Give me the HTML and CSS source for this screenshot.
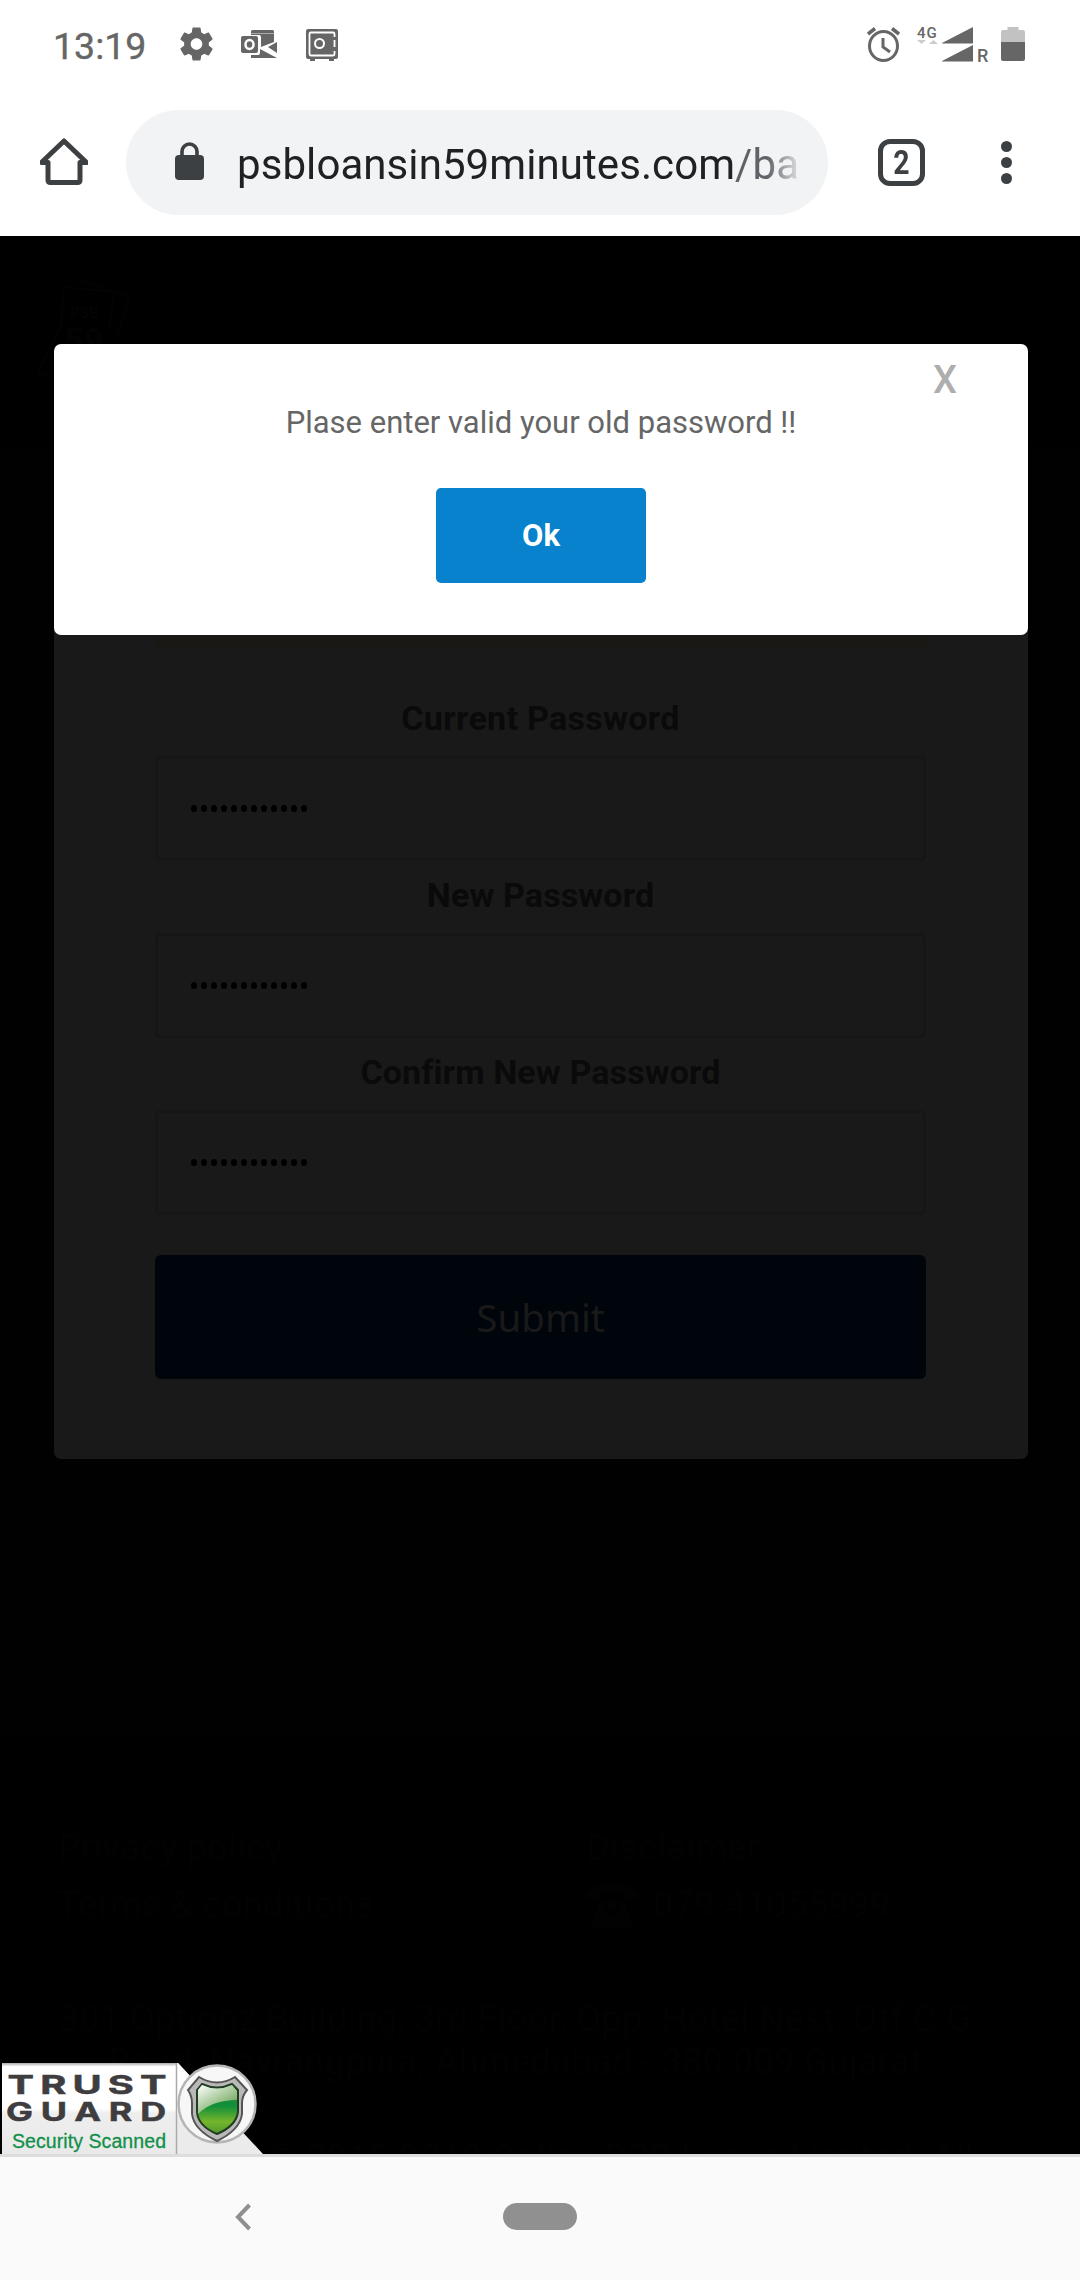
FILE: index.html
```html
<!DOCTYPE html>
<html lang="en">
<head>
<meta charset="utf-8">
<title>Change password</title>
<link rel="stylesheet" href="styles.css">
</head>
<body>
<header class="status">
  <span class="clock">13:19</span>
  <svg class="gear" viewBox="2 2 20 20" width="33" height="34"><path fill="#666" d="M19.43 12.98c.04-.32.07-.64.07-.98s-.03-.66-.07-.98l2.11-1.65c.19-.15.24-.42.12-.64l-2-3.46c-.12-.22-.39-.3-.61-.22l-2.49 1c-.52-.4-1.08-.73-1.69-.98l-.38-2.650C14.460 2.180 14.250 2 14 2h-4c-.25 0-.46.18-.49.42l-.38 2.650c-.61.25-1.170.59-1.690.98l-2.490-1c-.23-.09-.49 0-.61.22l-2 3.460c-.13.22-.07.49.12.64l2.110 1.650c-.04.32-.07.65-.07.98s.03.66.07.98l-2.110 1.650c-.19.15-.24.42-.12.64l2 3.460c.12.22.39.3.61.22l2.490-1c.52.4 1.080.73 1.690.98l.38 2.650c.03.24.24.42.49.42h4c.25 0 .46-.18.49-.42l.38-2.650c.61-.25 1.170-.59 1.690-.98l2.490 1c.23.09.49 0 .61-.22l2-3.460c.12-.22.07-.49-.12-.64l-2.110-1.650zM12 15.500c-1.930 0-3.500-1.570-3.500-3.500s1.570-3.500 3.500-3.500 3.500 1.570 3.500 3.500-1.570 3.500-3.500 3.500z"/></svg>
  <svg class="mail" width="37" height="29" viewBox="0 0 37 29"><path fill="#666" d="M10 5V1.500q0-1.500 1.500-1.500h20q1.500 0 1.500 1.500V12l-13 5V7q0-2-2-2zM19 19l17 9H10v-3h7q2 0 2-2zM27 17l9-5v11z"/><path stroke="#aaa" d="M10 3.500h23"/><rect y="6" width="17" height="17" rx="2" fill="#666"/><ellipse cx="8.500" cy="14.500" rx="4" ry="4.500" fill="none" stroke="#fff" stroke-width="2.500"/></svg>
  <svg class="safe" width="32" height="33" viewBox="0 0 32 33"><path fill="#666" d="M2 0h28q2 0 2 2v26q0 2-2 2h-2v2h-5v-2H9v2H4v-2H2q-2 0-2-2V2q0-2 2-2z"/><path fill="none" stroke="#fff" stroke-width="1.800" d="M28.500 8V5q0-1.500-1.500-1.500H5q-1.500 0-1.500 1.500v20q0 1.500 1.500 1.500h22q1.500 0 1.500-1.500v-3M28.500 11v7"/><circle cx="13.500" cy="14.500" r="4.500" fill="none" stroke="#fff" stroke-width="2"/></svg>
  <svg class="alarm" width="33" height="35" viewBox="0 0 33 35"><g fill="none" stroke="#666" stroke-width="3"><ellipse cx="16.500" cy="19" rx="14" ry="14.500"/><path d="M16 11v9l7 5"/><path stroke-width="3.500" d="M1 7l7-5.500M32 7l-7-5.500"/></g></svg>
  <svg class="signal" width="74" height="44" viewBox="0 -4 74 44"><text x="0" y="12" class="net">4G</text><path fill="#ccc" d="M0 14h9l-4.500 4zM12 18h9l-4.500-4z"/><path fill="#666" d="M25 17.500V17L56 1v16.500zM25 35.500V35L56 19v16.500z"/><text x="60" y="35.500" class="roam">R</text></svg>
  <svg class="battery" width="24" height="34" viewBox="0 0 24 34"><path fill="#c2c2c2" d="M6.500 0h11v3H22q2 0 2 2v11H0V5q0-2 2-2h4.500z"/><path fill="#666" d="M0 15h24v17q0 2-2 2H2q-2 0-2-2z"/></svg>
</header>

<nav class="toolbar">
  <svg class="home" width="48" height="48" viewBox="0 0 48 48"><path fill="none" stroke="#3c4043" stroke-width="5" stroke-linejoin="round" d="M1.500 24.500h6.500V42q0 2.500 2.500 2.500h27q2.500 0 2.500-2.500V24.500h6.500L24 3z"/></svg>
  <div class="address">
    <svg class="lock" width="29" height="38" viewBox="0 0 29 38"><rect y="13" width="29" height="25" rx="4" fill="#3c4043"/><path fill="none" stroke="#3c4043" stroke-width="3.600" d="M7 14V9.500a7.500 7.500 0 0 1 15 0V14"/></svg>
    <div class="url">psbloansin59minutes.com<span class="path">/ban</span></div>
  </div>
  <div class="tabs"><span>2</span></div>
  <div class="menu"><i></i><i></i><i></i></div>
</nav>

<main class="page">
  <div class="site-head">
    <svg width="100" height="110" viewBox="0 0 100 110" fill="none" stroke="#030303" stroke-width="2"><path d="M28 7l50 5-5 38M43 0l50 17-12 40M28 7l-3 40L2 92l30 14"/><text x="34" y="38" class="logo-top">PSB</text><text x="28" y="72" class="logo-num">59</text></svg>
  </div>
  <section class="form-area">
    <form class="card">
      <div class="notice"></div>
      <label>Current Password</label>
      <div class="field"><i></i><i></i><i></i><i></i><i></i><i></i><i></i><i></i><i></i><i></i><i></i><i></i></div>
      <label>New Password</label>
      <div class="field"><i></i><i></i><i></i><i></i><i></i><i></i><i></i><i></i><i></i><i></i><i></i><i></i></div>
      <label>Confirm New Password</label>
      <div class="field"><i></i><i></i><i></i><i></i><i></i><i></i><i></i><i></i><i></i><i></i><i></i><i></i></div>
      <button class="submit" type="button">Submit</button>
    </form>
  </section>
  <footer class="site-foot">
    <div class="links">
      <span>Privacy policy</span><span>Disclaimer</span>
      <span>Terms &amp; conditions</span><span class="phone"><svg width="52" height="45" viewBox="0 0 52 45"><path fill="#020202" d="M0 15Q4 0 26 0t26 15l-12 2-4-8H16l-4 8zM14 18h24l8 20v7H6v-7z"/><circle cx="26" cy="23" r="7" fill="none" stroke="#000" stroke-width="3"/></svg>079-41055999</span>
    </div>
    <p class="addr">301 Optionz Building, 3rd Floor, Opp. Hotel Nest, Off C.G.<br>Road, Navrangpura, Ahmedabad - 380 009 Gujarat.</p>
    <p class="copyright">Copyright © 2018-2019 Online PSB Loans Limited. All</p>
  </footer>

  <div class="modal">
    <span class="close">X</span>
    <p class="message">Plase enter valid your old password !!</p>
    <button class="ok" type="button">Ok</button>
  </div>

  <svg class="trust" width="264" height="91" viewBox="0 0 264 91">
    <defs>
      <linearGradient id="panel" x1="0" y1="0" x2="0" y2="1"><stop offset="0" stop-color="#aaa"/><stop offset=".04" stop-color="#fff"/><stop offset=".5" stop-color="#fff"/><stop offset=".55" stop-color="#eee"/><stop offset="1" stop-color="#e9e9e9"/></linearGradient>
      <linearGradient id="green" x1="0" y1="0" x2="0" y2="1"><stop offset="0" stop-color="#14813a"/><stop offset=".45" stop-color="#149039"/><stop offset=".75" stop-color="#75b52c"/><stop offset="1" stop-color="#4d9a2a"/></linearGradient>
      <linearGradient id="shine" x1="0" y1="0" x2=".8" y2="1"><stop offset="0" stop-color="#fff"/><stop offset="1" stop-color="#5c9c45"/></linearGradient>
    </defs>
    <path fill="#ebebeb" d="M177 0h1l85 91h-86z"/>
    <path fill="#fff" d="M177 0h1l20 22v30h-21z"/>
    <rect x="2" width="174" height="91" fill="url(#panel)"/>
    <path stroke="#aaa" stroke-width="1.500" d="M176.500 0v91"/>
    <g class="brand">
      <text y="31" textLength="104" transform="translate(7.500 0) scale(1.53 1)">TRUST</text>
      <text y="58" textLength="116" transform="translate(6 0) scale(1.380 1)">GUARD</text>
    </g>
    <text class="scan" x="12" y="84.500" textLength="154">Security Scanned</text>
    <circle cx="217" cy="41" r="38.500" fill="#f7f7f7" stroke="#b5b5b5" stroke-width="2.500"/>
    <path fill="#b9b9b9" stroke="#555" stroke-width="2" d="M199 14Q217 25 235 14L247 27Q242 33 242 40V51Q240 67 217 78 194 67 192 51V40Q192 33 188 27z"/>
    <path fill="url(#green)" stroke="#223d22" stroke-width="2" d="M202 21Q217 28 232 21L238 27V49Q236 63 217 71 198 63 197 49V27z"/>
    <path fill="url(#shine)" d="M202 22Q217 29 232 22L237 28V37Q212 37 198 51V27z"/>
  </svg>
</main>

<nav class="navbar">
  <svg class="back" width="16" height="28" viewBox="0 0 16 28"><path fill="none" stroke="#8f8f8f" stroke-width="4" d="M14.500 2L3 14l11.500 12"/></svg>
  <span class="pill"></span>
</nav>
</body>
</html>
```
FILE: styles.css
```css
* { box-sizing: border-box; }
body { margin: 0; width: 1080px; height: 2280px; overflow: hidden; background: #fff; font-family: Roboto, sans-serif; display: flex; flex-direction: column; }
svg { display: block; flex: none; }
button { border: 0; padding: 0; font-family: inherit; }
p { margin: 0; }

.status { height: 90px; padding: 27px 55px 0 53px; display: flex; align-items: flex-start; color: #666; }
.clock { font-size: 37.5px; line-height: 38px; width: 127px; -webkit-text-stroke: .4px #666; }
.mail { margin: 3px 0 0 28px; }
.safe { margin: 2px 0 0 28px; }
.alarm { margin-left: auto; }
.signal { margin: -5px 0 0 17px; }
.battery { margin-left: 10px; }
.net { font: 500 15px Roboto, sans-serif; letter-spacing: 1px; fill: #666; }
.roam { font: 500 18px Roboto, sans-serif; fill: #666; }

.toolbar { height: 146px; padding: 0 67px 0 40px; display: flex; align-items: flex-start; }
.home { margin-top: 48px; }
.address { margin: 20px 0 0 38px; width: 702px; height: 105px; border-radius: 53px; background: #f1f3f4; display: flex; align-items: center; padding: 0 26px 0 49px; }
.lock { margin-bottom: 3px; }
.url { margin-left: 33px; width: 565px; overflow: hidden; white-space: nowrap; font-size: 42px; line-height: 52px; padding-top: 4px; color: #202124; letter-spacing: .08px; -webkit-mask-image: linear-gradient(to right, #000 530px, transparent 567px); mask-image: linear-gradient(to right, #000 530px, transparent 567px); }
.path { color: #5f6368; }
.tabs { margin: 49px 0 0 50px; width: 47px; height: 47px; border: 5px solid #3c4043; border-radius: 12px; font-size: 33px; font-weight: 700; line-height: 37px; text-align: center; color: #3c4043; }
.tabs span { display: inline-block; transform: scaleX(.86); }
.menu { margin: 51px 0 0 76px; display: flex; flex-direction: column; gap: 5px; }
.menu i { width: 11px; height: 11px; border-radius: 50%; background: #3c4043; }

.page { position: relative; height: 1918px; background: #000; overflow: hidden; }
.site-head { height: 210px; padding: 44px 0 0 36px; }
.logo-top { font: 700 15px Roboto, sans-serif; stroke: none; fill: #030404; }
.logo-num { font: 700 34px Roboto, sans-serif; stroke: none; fill: #050302; }
.form-area { height: 1291px; background: #010101; padding: 0 52px 0 54px; }
.card { height: 1013px; padding: 0 102px 0 101px; background: #191919; border-radius: 0 0 7px 7px; display: flex; flex-direction: column; }
.notice { height: 202px; background: #191815; border-radius: 5px; margin-bottom: 37px; }
.card label { height: 72px; padding-top: 14px; text-align: center; font-size: 34px; line-height: 40px; font-weight: 700; letter-spacing: .1px; color: #0a0a0a; }
.card .notice + label { height: 71px; padding-top: 13px; letter-spacing: .3px; }
.field { height: 105px; border: 3px solid #161616; border-radius: 5px; display: flex; align-items: center; gap: 4px; padding-left: 33px; }
.field i { width: 6px; height: 7px; border-radius: 50%; background: #000; }
.submit { margin-top: 40px; height: 124px; border-radius: 6px; background: #00050b; color: #191919; font: 38.5px "Noto Sans", sans-serif; }

.site-foot { padding: 83px 0 0 58px; color: #020202; font-size: 36px; letter-spacing: .4px; }
.links { display: grid; grid-template-columns: 528px 1fr; line-height: 57px; }
.phone { display: flex; align-items: center; gap: 15px; }
.addr { width: 924px; margin-top: 64px; text-align: center; line-height: 43px; white-space: nowrap; }
.copyright { width: 960px; margin-top: 53px; text-align: center; line-height: 43px; white-space: nowrap; }

.modal { position: absolute; left: 54px; top: 108px; width: 974px; height: 291px; background: #fff; border-radius: 7px; display: flex; flex-direction: column; align-items: center; }
.close { align-self: flex-end; margin: 14px 71px 0 0; font-size: 38px; line-height: 44px; font-weight: 500; color: #aeaeae; }
.message { margin-top: 1px; font-size: 31px; line-height: 40px; color: #666; }
.ok { margin-top: 45px; width: 210px; height: 95px; border-radius: 5px; background: #0882cc; color: #fff; font-size: 31px; font-weight: 700; }

.trust { position: absolute; left: 0; bottom: 0; }
.brand { font: 700 26px "Inter", sans-serif; fill: #403d40; stroke: #403d40; stroke-width: .5px; }
.scan { font: 19.5px "Liberation Sans", sans-serif; fill: #12904a; stroke: #12904a; stroke-width: .3px; }

.navbar { height: 126px; border-top: 3px solid #ddd; background: #fafafa; display: flex; padding: 46px 0 0 235px; }
.pill { margin-left: 252px; width: 74px; height: 27px; border-radius: 14px; background: #909090; }
```
